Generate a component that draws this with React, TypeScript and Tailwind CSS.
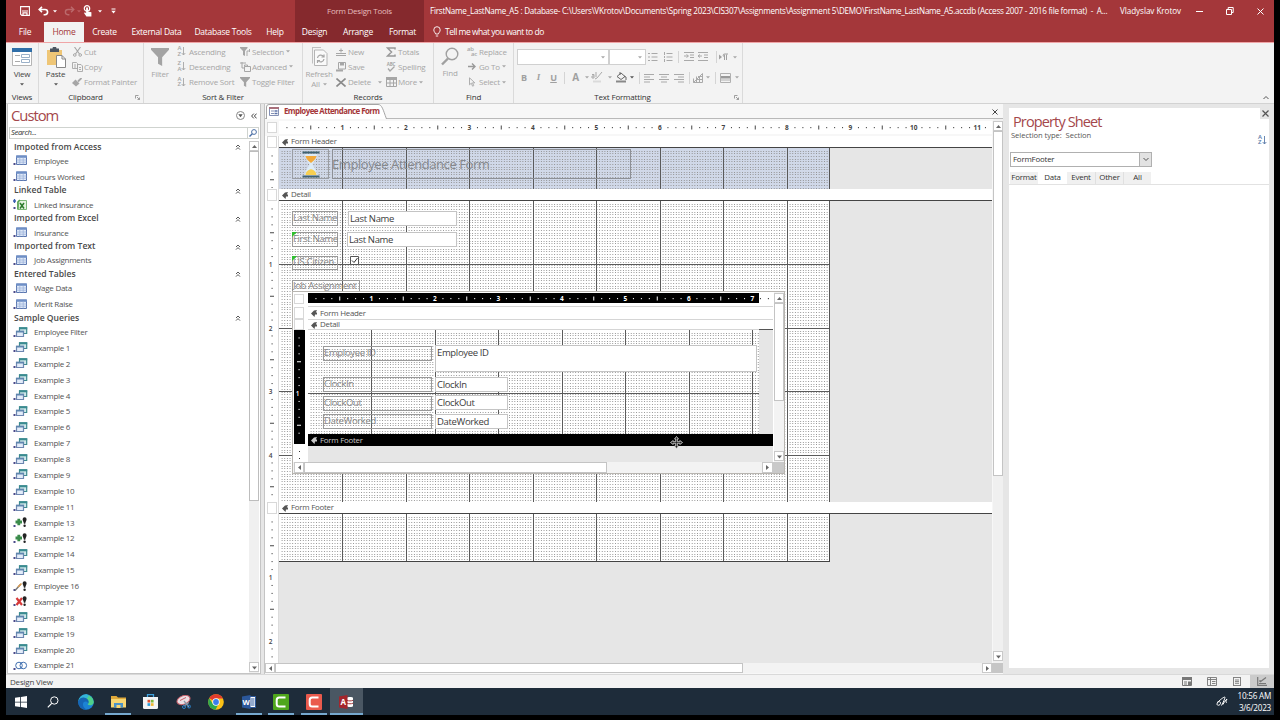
import type { ReactNode } from "react";

// ── Data ──────────────────────────────────────────────────────────────────────

type IconKind = "table" | "excel" | "query" | "append" | "update" | "delete" | "union";

const navGroups: { title: string; items: [string, IconKind][] }[] = [
  { title: "Impoted from Access", items: [["Employee", "table"], ["Hours Worked", "table"]] },
  { title: "Linked Table", items: [["Linked Insurance", "excel"]] },
  { title: "Imported from Excel", items: [["Insurance", "table"]] },
  { title: "Imported from Text", items: [["Job Assignments", "table"]] },
  { title: "Entered Tables", items: [["Wage Data", "table"], ["Merit Raise", "table"]] },
  {
    title: "Sample Queries",
    items: [
      ["Employee Filter", "query"],
      ["Example 1", "query"],
      ["Example 2", "query"],
      ["Example 3", "query"],
      ["Example 4", "query"],
      ["Example 5", "query"],
      ["Example 6", "query"],
      ["Example 7", "query"],
      ["Example 8", "query"],
      ["Example 9", "query"],
      ["Example 10", "query"],
      ["Example 11", "query"],
      ["Example 13", "append"],
      ["Example 12", "append"],
      ["Example 14", "query"],
      ["Example 15", "query"],
      ["Employee 16", "update"],
      ["Example 17", "delete"],
      ["Example 18", "query"],
      ["Example 19", "query"],
      ["Example 20", "query"],
      ["Example 21", "union"],
    ],
  },
];

// One inch on the design surface
const INCH = 63.5;
const DOT = INCH / 24;

// ── Small shared pieces ───────────────────────────────────────────────────────

function Svg({ w, h, children, className = "" }: { w: number; h: number; children: ReactNode; className?: string }) {
  return (
    <svg width={w} height={h} viewBox={`0 0 ${w} ${h}`} fill="none" className={`shrink-0 ${className}`}>
      {children}
    </svg>
  );
}

function Caret({ className = "text-[#a8a8a8]" }: { className?: string }) {
  return (
    <Svg w={4} h={3} className={className}>
      <path d="M0 .3h4L2 2.6z" fill="currentColor" />
    </Svg>
  );
}

function ScrollButton({ dir, className = "" }: { dir: "up" | "down" | "left" | "right"; className?: string }) {
  const shapes = { up: "M2 6l2.5-3L7 6z", down: "M2 3.5l2.5 3 2.5-3z", left: "M6 2L3 4.5 6 7z", right: "M3 2l3 2.5L3 7z" };
  return (
    <div className={`flex shrink-0 items-center justify-center border border-[#c9c9c9] bg-white ${className}`}>
      <Svg w={9} h={9}>
        <path d={shapes[dir]} fill="#666" />
      </Svg>
    </div>
  );
}

// ── Title bar and tabs ────────────────────────────────────────────────────────

function QuickAccess() {
  return (
    <div className="flex h-[22px] w-[289px] items-center pl-[14px] text-white">
      <Svg w={10} h={10}>
        <path d="M.6.6h8.8v8.8H1.8L.6 8.2z" stroke="currentColor" strokeWidth="1.1" />
        <path d="M2 5h6M3 9V6.8h4V9" stroke="currentColor" strokeWidth="1.2" />
      </Svg>
      <Svg w={11} h={10} className="ml-[8px]">
        <path d="M4 .8L1.2 3.5 4 6.2M1.4 3.5H7a2.6 2.6 0 010 5.2H5.6" stroke="currentColor" strokeWidth="1.6" />
      </Svg>
      <Caret className="ml-[4px] text-white" />
      <Svg w={11} h={10} className="ml-[7px] opacity-25">
        <path d="M7 .8l2.8 2.7L7 6.2M9.6 3.5H4a2.6 2.6 0 000 5.2h1.4" stroke="currentColor" strokeWidth="1.4" />
      </Svg>
      <Caret className="ml-[2px] text-[#bb5d60]" />
      <Svg w={10} h={12} className="ml-[2px]">
        <circle cx="4" cy="3.4" r="2.7" stroke="currentColor" strokeWidth="1.2" />
        <path d="M3.1 2.5H5v4l3.4.8v4.2h-5L1 8l1-.8 1.1 1z" fill="currentColor" />
      </Svg>
      <Caret className="ml-[5px] text-white" />
      <Svg w={5} h={6} className="ml-[9px]">
        <path d="M.5 1h4" stroke="currentColor" />
        <path d="M.3 2.8h4.4L2.5 5.4z" fill="currentColor" />
      </Svg>
    </div>
  );
}

function TitleBar() {
  return (
    <header className="flex h-[42px] shrink-0 bg-[#a4373a] text-[8.5px] tracking-[-0.25px] text-white">
      <div className="flex w-[289px] flex-col">
        <QuickAccess />
        <div className="flex h-[20px] items-center font-medium">
          <span className="flex w-[38px] justify-center">File</span>
          <span className="flex h-full w-[40px] items-center justify-center bg-[#f3f3f3] text-[#a4373a]">Home</span>
          <span className="flex w-[41px] justify-center">Create</span>
          <span className="flex w-[63px] justify-center">External Data</span>
          <span className="flex w-[70px] justify-center">Database Tools</span>
          <span className="flex w-[34px] justify-center">Help</span>
        </div>
      </div>
      <div className="flex w-[129px] flex-col bg-[#85292d]">
        <span className="flex h-[22px] items-center justify-center text-[8px] tracking-[-0.25px] text-[#e6bcbe]">Form Design Tools</span>
        <div className="flex h-[20px] items-center font-medium">
          <span className="flex w-[39px] justify-center">Design</span>
          <span className="flex w-[48px] justify-center">Arrange</span>
          <span className="flex w-[41px] justify-center">Format</span>
        </div>
      </div>
      <div className="flex flex-1 flex-col">
        <div className="flex h-[22px] items-center whitespace-nowrap text-[8.1px]">
          <span className="w-[689px] pl-[6px] tracking-[-0.25px]">
            FirstName_LastName_A5 : Database- C:\Users\VKrotov\Documents\Spring 2023\CIS307\Assignments\Assignment
            5\DEMO\FirstName_LastName_A5.accdb (Access 2007 - 2016 file format) &nbsp;- &nbsp;A...
          </span>
          <span className="w-[79px] pl-[7px] tracking-[-0.05px]">Vladyslav Krotov</span>
          <Svg w={7} h={8} className="ml-[4px]">
            <path d="M0 4.5h7" stroke="#fff" />
          </Svg>
          <Svg w={8} h={8} className="ml-[23px]">
            <path d="M.5 2.5h5v5h-5zM2.2 2.2V.5h5v5H5.8" stroke="#fff" />
          </Svg>
          <Svg w={7} h={7} className="ml-[23px]">
            <path d="M.5.5l6 6M6.5.5l-6 6" stroke="#fff" />
          </Svg>
        </div>
        <div className="flex h-[20px] items-center pl-[9px] font-medium">
          <Svg w={8} h={12}>
            <path d="M2.6 8C2.4 6.6.8 5.9.8 3.9a3.2 3.2 0 016.4 0c0 2-1.6 2.7-1.8 4.1zM2.8 10h2.4" stroke="#fff" strokeWidth=".9" />
          </Svg>
          <span className="ml-[4px] tracking-[-0.48px]">Tell me what you want to do</span>
        </div>
      </div>
    </header>
  );
}

// ── Ribbon ────────────────────────────────────────────────────────────────────

function Group({ label, className, launcher, children }: { label: string; className: string; launcher?: boolean; children: ReactNode }) {
  return (
    <section className={`flex shrink-0 flex-col border-r border-[#dadada] ${className}`}>
      <div className="flex h-[48px] pt-[1px]">{children}</div>
      <div className={`relative flex h-[13px] items-center justify-center text-[8px] tracking-[-0.18px] text-[#333] ${launcher ? "pr-[11px]" : ""}`}>
        {label}
        {launcher && (
          <Svg w={5} h={5} className="absolute right-[3px] top-[5px]">
            <path d="M.5 3.5v-3h3M2 2l2.5 2.5M4.5 2.5v2h-2" stroke="#888" strokeWidth=".8" />
          </Svg>
        )}
      </div>
    </section>
  );
}

function Cmd({ icon, label, caret, gap = "" }: { icon: ReactNode; label: string; caret?: boolean; gap?: string }) {
  return (
    <div className="flex h-[15.3px] items-center whitespace-nowrap text-[#a6a6a6]">
      <span className="flex w-[12px] shrink-0 justify-center">{icon}</span>
      <span className="ml-[1px]">{label}</span>
      {caret && <span className={`ml-[2px] ${gap}`}><Caret /></span>}
    </div>
  );
}

function SortIcon({ a, b }: { a: string; b: string }) {
  return (
    <span className="flex items-center">
      <span className="flex flex-col text-[6px] font-semibold leading-[5.5px]">
        <span>{a}</span>
        <span>{b}</span>
      </span>
      <Svg w={5} h={9}>
        <path d="M2.5 0v8M.7 6l1.8 2 1.8-2" stroke="currentColor" strokeWidth=".9" />
      </Svg>
    </span>
  );
}

function Funnel({ size = 10 }: { size?: number }) {
  return (
    <svg width={size} height={size} viewBox="0 0 10 10" className="shrink-0">
      <path d="M0 0h10v1L6.2 5.2V10L3.9 8.8V5.2L0 1z" fill="#a3a3a3" />
    </svg>
  );
}

const Sep = () => <i className="h-[12px] w-px shrink-0 bg-[#d4d4d4]" />;

function Lines({ d, className = "" }: { d: string; className?: string }) {
  return (
    <Svg w={10} h={10} className={className}>
      <path d={d} stroke="#a9a9a9" />
    </Svg>
  );
}

function TextFormatting() {
  return (
    <div className="flex w-full flex-col">
      <div className="mt-[5px] flex h-[16px] items-center">
        <div className="ml-[3px] flex h-[16px] w-[92px] items-center justify-end border border-[#d0d0d0] bg-white pr-[3px]"><Caret /></div>
        <div className="flex h-[16px] w-[37px] items-center justify-end border border-[#d0d0d0] bg-white pr-[3px]"><Caret /></div>
        <Lines className="ml-[2px]" d="M0 1.5h2M3.5 1.5h6M0 5h2M3.5 5h6M0 8.5h2M3.5 8.5h6" />
        <Lines className="ml-[5px] mr-[5px]" d="M1.5 0v3M3.5 1.5h6M1.5 4v2M3.5 5h6M1.5 7v3M3.5 8.5h6" />
        <Sep />
        <Lines className="ml-[5px]" d="M0 .5h10M6 3h4M6 5.5h4M0 8.5h10M0 4h4M2.5 2.5L4.5 4l-2 1.5" />
        <Lines className="ml-[4px] mr-[8px]" d="M0 .5h10M6 3h4M6 5.5h4M0 8.5h10M0 4h4M2 2.5L0 4l2 1.5" />
        <Sep />
        <Svg w={9} h={8} className="ml-[2px] mr-[5px]">
          <path d="M0 1.5L3 4 0 6.5z" fill="#a0a0a0" />
          <path d="M5.5 7V1.5M7.5 7V1.5M9 1H5.5a1.3 1.3 0 000 2.6" stroke="#a0a0a0" />
        </Svg>
        <Caret />
      </div>
      <div className="mt-[5px] flex h-[15px] items-center text-[9px] font-bold text-[#a0a0a0]">
        <span className="ml-[3px] w-[14px] text-center">B</span>
        <span className="w-[15px] text-center font-['Liberation_Serif'] italic">I</span>
        <span className="w-[15px] text-center underline">U</span>
        <span className="w-[3px]" />
        <Sep />
        <span className="ml-[4px] w-[13px] text-center text-[10px]">A</span>
        <span className="ml-[3px]"><Caret /></span>
        <Svg w={12} h={11} className="ml-[2px]">
          <path d="M2 9.5h8" stroke="#dadada" strokeWidth="2" />
          <path d="M11 0L6 6l-2 1M1 2.5h2V6H1V4h2M5 0v5" stroke="#a9a9a9" />
        </Svg>
        <span className="ml-[5px]"><Caret /></span>
        <Svg w={12} h={11} className="ml-[3px]">
          <path d="M1 9.5h10" stroke="#888" strokeWidth="2" />
          <path d="M2 4.5L6 1l4 3.5-4 3zM5 3V0" stroke="#666" />
          <path d="M9 4l2 1v3" stroke="#666" />
        </Svg>
        <span className="ml-[3px] mr-[5px]"><Caret className="text-[#555]" /></span>
        <Sep />
        <Lines className="ml-[4px]" d="M0 1.5h10M0 4h6M0 6.5h10M0 9h6" />
        <Lines className="ml-[5px]" d="M0 1.5h10M2 4h6M0 6.5h10M2 9h6" />
        <Lines className="ml-[5px] mr-[5px]" d="M0 1.5h10M4 4h6M0 6.5h10M4 9h6" />
        <Sep />
        <Lines className="ml-[3px] mr-[3px]" d="M.5 9.5h9v-9zM.5 9.5v-4M3.5 9.5v-6M6.5 9.5v-6M3 6.5h6M5 3.5h5" />
        <Caret />
        <span className="w-[5px]" />
        <Sep />
        <Svg w={11} h={10} className="ml-[4px] mr-[4px]">
          <path d="M.5.5h10v9H.5zM.5 7h10" stroke="#b0b0b0" />
          <path d="M1 3h9v2.5H1z" fill="#999" />
        </Svg>
        <Caret />
      </div>
    </div>
  );
}

function Ribbon() {
  return (
    <div className="flex h-[62px] shrink-0 border-b border-t border-b-[#d2d2d2] border-t-[#f0a5a7] bg-[#f3f3f3] text-[8px] tracking-[-0.2px]">
      <Group label="Views" className="w-[33px]">
        <div className="flex w-[32px] flex-col items-center pt-[4px] text-[#444]">
          <Svg w={20} h={18}>
            <path d="M.5.5h19v17H.5z" fill="#fff" stroke="#b5b5b5" />
            <path d="M0 0h20v4H0z" fill="#2f6ea8" />
            <path d="M3 7.5h5M3 13.5h5" stroke="#aaa" />
            <path d="M9.5 6.5h8v3h-8zM9.5 11.5h8v3h-8z" stroke="#9ab0c8" />
          </Svg>
          <span className="mt-[2px]">View</span>
          <Caret className="mt-[3px] text-[#555]" />
        </div>
      </Group>
      <Group label="Clipboard" className="w-[105px]" launcher>
        <div className="flex w-[33px] flex-col items-center pt-[3px] text-[#444]">
          <Svg w={20} h={21}>
            <path d="M1 3h15v15H1z" fill="#efc676" />
            <path d="M4 1.5h2.5a2 2 0 014 0H13V5H4z" fill="#4c5560" />
            <path d="M10.5 8.5H16l3.5 3.5v8.5h-9z" fill="#fff" stroke="#888" />
            <path d="M16 8.5V12h3.5" stroke="#888" />
          </Svg>
          <span>Paste</span>
          <Caret className="mt-[3px] text-[#555]" />
        </div>
        <div className="-ml-[1px]">
          <Cmd
            label="Cut"
            icon={
              <Svg w={9} h={10}>
                <path d="M1.5 0l5 7M7.5 0l-5 7" stroke="currentColor" strokeWidth="1.1" />
                <circle cx="1.8" cy="8" r="1.3" stroke="currentColor" />
                <circle cx="7.2" cy="8" r="1.3" stroke="currentColor" />
              </Svg>
            }
          />
          <Cmd
            label="Copy"
            icon={
              <Svg w={11} h={10}>
                <path d="M.5.5h4l1 1v5h-5zM5.5 2.5H9L10.5 4v5.5h-5zM2 3h2M2 5h2M7 5.5h2M7 7.5h2" stroke="currentColor" strokeWidth=".9" />
              </Svg>
            }
          />
          <Cmd
            label="Format Painter"
            icon={
              <Svg w={10} h={9}>
                <path d="M9.5 0L6 3.5" stroke="currentColor" strokeWidth="1.8" />
                <path d="M3.5 1.5l4 4-3.5 3L0 5z" fill="currentColor" />
              </Svg>
            }
          />
        </div>
      </Group>
      <Group label="Sort & Filter" className="w-[159px]">
        <div className="flex w-[32px] flex-col items-center pt-[4px] text-[#a6a6a6]">
          <Funnel size={18} />
          <span className="mt-[2px]">Filter</span>
        </div>
        <div className="w-[63px]">
          <Cmd label="Ascending" icon={<SortIcon a="A" b="Z" />} />
          <Cmd label="Descending" icon={<SortIcon a="Z" b="A" />} />
          <Cmd label="Remove Sort" icon={<SortIcon a="A" b="Z" />} />
        </div>
        <div>
          <Cmd
            caret
            label="Selection"
            icon={
              <Svg w={11} h={10}>
                <path d="M0 0h7.5v1L5 4v5L3 8V4L0 1z" fill="currentColor" />
                <path d="M7 9V4h2.500M9.500 2v3" stroke="currentColor" strokeWidth=".9" />
              </Svg>
            }
          />
          <Cmd
            caret
            label="Advanced"
            icon={
              <Svg w={11} h={10}>
                <path d="M0 1h6M2 0v6h2M4.5 4.5h6v5h-6zM4.5 4.5V3h3v1.5" stroke="currentColor" />
              </Svg>
            }
          />
          <Cmd label="Toggle Filter" icon={<Funnel />} />
        </div>
      </Group>
      <Group label="Records" className="w-[131px]">
        <div className="flex w-[32px] flex-col items-center pt-[2px] leading-[10px] text-[#a6a6a6]">
          <Svg w={17} h={21}>
            <path d="M1 1.5h9M1.5 1.5v16" stroke="#c0c0c0" />
            <path d="M3.5 4h9L16 7.5v12H3.5z" fill="#fafafa" stroke="#b5b5b5" />
            <path d="M6.5 12a3.3 3.3 0 016-1.5M13 8.5V11h-2.500M13 13a3.300 3.300 0 01-6 1.500M6.500 17v-2.500H9" stroke="#a5a5a5" strokeWidth="1.2" />
          </Svg>
          <span className="mt-[2px]">Refresh</span>
          <span className="flex items-center gap-[3px]">All <Caret /></span>
        </div>
        <div className="w-[50px]">
          <Cmd
            label="New"
            icon={
              <Svg w={10} h={8}>
                <path d="M0 5.5h10M0 7.5h10M5 .5v4M3 2.5h4" stroke="currentColor" />
              </Svg>
            }
          />
          <Cmd
            label="Save"
            icon={
              <Svg w={10} h={10}>
                <path d="M2.5.5h7V7h-7z" stroke="currentColor" />
                <path d="M4 1h4v2.5H4zM0 7.5h7v2H0z" fill="currentColor" />
              </Svg>
            }
          />
          <Cmd
            caret
            gap="pl-[5px]"
            label="Delete"
            icon={
              <Svg w={10} h={9}>
                <path d="M.5.5l9 8M9.5.5l-9 8" stroke="#8a8a8a" strokeWidth="1.6" />
              </Svg>
            }
          />
        </div>
        <div>
          <Cmd
            label="Totals"
            icon={
              <Svg w={10} h={10}>
                <path d="M9 2.5V1H1.5l4 4-4 4H9V7.5" stroke="#999" strokeWidth="1.5" />
              </Svg>
            }
          />
          <Cmd
            label="Spelling"
            icon={
              <span className="flex flex-col items-center text-[4.5px] font-bold leading-[4px]">
                ABC
                <Svg w={8} h={6}>
                  <path d="M1 2.5L3 5 7.5.5" stroke="currentColor" strokeWidth="1.3" />
                </Svg>
              </span>
            }
          />
          <Cmd
            caret
            label="More"
            icon={
              <Svg w={11} h={10}>
                <path d="M.5.5h10v9H.5zM.5 6h10M4 2v7M7.5 2v7" stroke="currentColor" />
                <path d="M0 0h11v3H0z" fill="currentColor" />
              </Svg>
            }
          />
        </div>
      </Group>
      <Group label="Find" className="w-[80px]">
        <div className="flex w-[32px] flex-col items-center pt-[3px] text-[#a6a6a6]">
          <Svg w={18} h={19}>
            <circle cx="11" cy="7" r="5.8" stroke="#a0a0a0" strokeWidth="1.4" />
            <path d="M7 11.5l-6 6" stroke="#a0a0a0" strokeWidth="2.4" />
          </Svg>
          <span className="mt-[1px]">Find</span>
        </div>
        <div>
          <Cmd
            label="Replace"
            icon={
              <span className="flex flex-col text-[6px] font-semibold leading-[5px]">
                <span className="h-[5px]">ab</span>
                <span className="h-[5px] pl-[4px]">ac</span>
              </span>
            }
          />
          <Cmd
            caret
            label="Go To"
            icon={
              <Svg w={8} h={7}>
                <path d="M0 3.5h7M4 .5l3 3-3 3" stroke="#999" strokeWidth="1.4" />
              </Svg>
            }
          />
          <Cmd
            caret
            label="Select"
            icon={
              <Svg w={8} h={10}>
                <path d="M1.5.8v7l1.8-1.6 1.3 3 1.2-.6-1.3-2.8h2.3z" stroke="currentColor" strokeWidth=".9" />
              </Svg>
            }
          />
        </div>
      </Group>
      <Group label="Text Formatting" className="w-[229px]" launcher>
        <TextFormatting />
      </Group>
      <div className="flex flex-1 items-end justify-end pb-[3px] pr-[5px]">
        <Svg w={6} h={5}>
          <path d="M.5 4L3 1.5 5.5 4" stroke="#555" />
        </Svg>
      </div>
    </div>
  );
}

// ── Navigation pane ───────────────────────────────────────────────────────────

function Bang() {
  return (
    <>
      <path d="M9.6 2.2a2 2 0 014 0c0 1.300-1 2.300-1.300 4.500h-1.400C10.600 4.500 9.600 3.500 9.600 2.200z" fill="#222" />
      <circle cx="11.600" cy="8.800" r="1.200" fill="#222" />
    </>
  );
}

function ObjectIcon({ kind }: { kind: IconKind }) {
  return (
    <Svg w={15} h={11}>
      <path d="M.5 8h2v2h-2z" fill="#4a4a8a" />
      {kind === "table" && (
        <>
          <path d="M3.5 1h10v8.500h-10z" fill="#dfe9f8" stroke="#5a76ae" />
          <path d="M3 .5h11v2.300H3z" fill="#6e8fc6" />
          <path d="M3.5 5h10M3.5 7.2h10M6.8 2.5v7M10.2 2.5v7" stroke="#9db4da" strokeWidth=".8" />
        </>
      )}
      {kind === "excel" && (
        <>
          <path d="M1.5 0v4M0 2h3" stroke="#3a5fb0" strokeWidth="1.3" />
          <path d="M6 1.5h7.500v9H5z" fill="#e4f3e0" stroke="#7db878" />
          <path d="M7 4l4 5.500M11 4L7 9.500" stroke="#2b7a2b" strokeWidth="1.5" />
          <path d="M4.800 10.500V3l2-2" stroke="#4f9e48" strokeWidth="1.3" />
        </>
      )}
      {kind === "query" && (
        <>
          <path d="M6.5.8h7.200v5.700H6.500z" fill="#cfe9ea" stroke="#3f8a90" strokeWidth="1.2" />
          <path d="M6 .3h8.200v2H6z" fill="#3a8b90" />
          <path d="M3.5 4.300h7v5.200h-7z" fill="#e3ecf9" stroke="#6d86b0" strokeWidth="1.2" />
          <path d="M3 3.800h8v1.700H3z" fill="#5f86ae" />
        </>
      )}
      {kind === "append" && (
        <>
          <path d="M2.5 5H9M5.800 1.800v6.500" stroke="#3a8b4a" strokeWidth="2.8" />
          <Bang />
        </>
      )}
      {kind === "update" && (
        <>
          <path d="M2 9.5L7.500 3.500" stroke="#777" strokeWidth="1.4" />
          <path d="M5 6l3.500-3.500" stroke="#d89a52" strokeWidth="1.7" />
          <Bang />
        </>
      )}
      {kind === "delete" && (
        <>
          <path d="M3.5 2L9 9M9 2L3.500 9" stroke="#d63a3a" strokeWidth="2.2" />
          <Bang />
        </>
      )}
      {kind === "union" && (
        <>
          <circle cx="6" cy="5.5" r="3.3" stroke="#3f6faf" />
          <circle cx="10.3" cy="5.5" r="3.3" stroke="#3f6faf" />
        </>
      )}
    </Svg>
  );
}

function NavPane() {
  return (
    <aside className="ml-[1px] flex w-[254px] shrink-0 flex-col border-b border-l border-r border-[#c4c4c4] bg-white">
      <div className="flex h-[23px] items-center pl-[3px] pr-[2px]">
        <h2 className="text-[14.8px] tracking-[-1px] text-[#a4474b]">Custom</h2>
        <Svg w={9} h={9} className="ml-auto">
          <circle cx="4.5" cy="4.5" r="4" stroke="#888" />
          <path d="M2.3 3.2h4.4L4.5 6.3z" fill="#555" />
        </Svg>
        <Svg w={6} h={6} className="ml-[6px] mr-[1px]">
          <path d="M2.8.6L.6 3l2.2 2.4M5.6.6L3.4 3l2.2 2.4" stroke="#444" />
        </Svg>
      </div>
      <div className="mx-[1px] flex h-[12px] items-center border border-[#cfd3cf] pl-[1px] text-[7.7px] italic tracking-[-0.4px] text-[#333]">
        Search...
        <span className="ml-auto flex h-full w-[11px] items-center justify-center border-l border-[#cfd3cf]">
          <Svg w={8} h={8}>
            <circle cx="5" cy="3" r="2.4" stroke="#4a6fa5" />
            <path d="M3.3 4.7L.5 7.5" stroke="#4a6fa5" strokeWidth="1.4" />
          </Svg>
        </span>
      </div>
      <div className="mt-[2px] flex min-h-0 flex-1">
        <div className="flex-1">
          {navGroups.map((group) => (
            <section key={group.title}>
              <div className="flex h-[12px] items-center pl-[6px] pr-[8px] text-[8.6px] font-semibold text-[#4a4a4a]">
                {group.title}
                <Svg w={6} h={6} className="ml-auto">
                  <path d="M1 3l2-2 2 2M1 5.6l2-2 2 2" stroke="#444" strokeWidth=".9" />
                </Svg>
              </div>
              {group.items.map(([label, kind]) => (
                <div key={label} className="flex h-[15.88px] items-center pl-[5px] text-[8px] tracking-[-0.27px] text-[#525252]">
                  <ObjectIcon kind={kind} />
                  <span className="ml-[6px]">{label}</span>
                </div>
              ))}
            </section>
          ))}
        </div>
        <div className="mr-[1px] flex w-[10px] flex-col bg-[#f0f0f0]">
          <ScrollButton dir="up" className="h-[10px]" />
          <div className="h-[350px] border border-[#bdbdbd] bg-white" />
          <ScrollButton dir="down" className="mb-[1px] mt-auto h-[10px]" />
        </div>
      </div>
    </aside>
  );
}

// ── Design surface ────────────────────────────────────────────────────────────

function Grid({ w, h }: { w: number; h: number }) {
  let dots = "";
  for (let y = DOT; y < h; y += DOT) dots += `M${DOT} ${Math.round(y) + 0.5}H${w}`;
  let lines = "";
  for (let x = INCH; x < w; x += INCH) lines += `M${Math.floor(x) + 0.5} 0V${h}`;
  for (let y = INCH; y < h; y += INCH) lines += `M0 ${Math.floor(y) + 0.5}H${w}`;
  return (
    <Svg w={w} h={h} className="block">
      <path d={dots} stroke="#8f8f8f" strokeDasharray={`0.9 ${DOT - 0.9}`} />
      <path d={lines} stroke="#5a5a5a" />
    </Svg>
  );
}

function HRuler({ w, color, offset = 0 }: { w: number; color: string; offset?: number }) {
  const step = INCH / 8;
  const marks = Array.from({ length: Math.floor((w + offset) / step) }, (_, i) => i + 1).filter((i) => i * step > offset);
  return (
    <Svg w={w} h={10}>
      {marks.map((i) => {
        const x = i * step - offset;
        if (i % 8 === 0)
          return (
            <text key={i} x={x - 0.2} y={8} fontSize={6.5} fontWeight={700} textAnchor="middle" fill={color}>
              {i / 8}
            </text>
          );
        return <path key={i} d={i % 4 === 0 ? `M${x} 3.5v4` : `M${x} 5v1.2`} stroke={color} />;
      })}
    </Svg>
  );
}

function VRuler({ h, color }: { h: number; color: string }) {
  const step = INCH / 8;
  const marks = Array.from({ length: Math.floor(h / step) }, (_, i) => i + 1);
  return (
    <Svg w={9} h={h} className="block">
      {marks.map((i) => {
        const y = i * step;
        if (i % 8 === 0)
          return (
            <text key={i} x={3.5} y={y + 2.5} fontSize={6.5} fontWeight={600} textAnchor="middle" fill={color}>
              {i / 8}
            </text>
          );
        return <path key={i} d={i % 4 === 0 ? `M3 ${y}h4` : `M4.5 ${y}h1.2`} stroke={color} />;
      })}
    </Svg>
  );
}

function SectionBar({ label, className = "bg-white text-[#555]" }: { label: string; className?: string }) {
  return (
    <div className={`flex shrink-0 items-center pl-[3px] pt-[1px] text-[7.9px] tracking-[-0.25px] ${className}`}>
      <Svg w={6} h={7}>
        <path d="M0 3.5L3 .5 6 0 4.8 2.5H6v2H4L3.5 7z" fill="currentColor" />
      </Svg>
      <span className="ml-[3px]">{label}</span>
    </div>
  );
}

// Controls sit at their own coordinates on the form canvas
function FormLabel({ at, text, flag }: { at: string; text: string; flag?: boolean }) {
  return (
    <div className={`absolute flex items-center border border-[#999] pb-[2px] text-[9.5px] leading-none tracking-[-0.35px] text-[#858585] ${at}`}>
      {flag && <i className="absolute left-[-1px] top-[-1px] border-r-[5px] border-t-[5px] border-r-transparent border-t-[#2fc02f]" />}
      <span className="whitespace-nowrap">{text}</span>
    </div>
  );
}

function FormField({ at, text }: { at: string; text: string }) {
  return (
    <div className={`absolute border border-[#c4c4c4] bg-white pl-[1px] pt-[1px] text-[9.5px] leading-[11px] tracking-[-0.35px] text-[#3c3c3c] ${at}`}>
      {text}
    </div>
  );
}

function Subform() {
  return (
    <div className="absolute left-[13px] top-[90px] flex h-[183px] w-[493px] flex-col border border-[#b8b5b0] bg-white">
      <div className="flex h-[170px]">
        <div className="flex w-[15px] shrink-0 flex-col pl-[1px]">
          <div className="mt-[2px] h-[10px] w-[10px] border border-[#d8d8d8] bg-white" />
          <div className="mt-[3px] h-[12px] w-[10px] border border-[#d8d8d8]" />
          <div className="h-[11px] w-[10px] border border-[#d8d8d8]" />
          <div className="h-[114px] w-[11px] shrink-0 bg-black"><VRuler h={110} color="#fff" /></div>
          <div className="flex flex-col gap-[6px] pl-[5px] pt-[7px]">
            <i className="h-px w-px bg-[#333]" />
            <i className="h-px w-px bg-[#333]" />
          </div>
        </div>
        <div className="flex w-[465px] shrink-0 flex-col bg-[#e6e6e6]">
          <div className="flex h-[14px] bg-white pt-[1px]">
            <div className="h-[10px] w-[451px] bg-black"><HRuler w={451} color="#fff" /></div>
            <div className="h-[10px] w-[14px]"><HRuler w={14} color="#333" offset={451} /></div>
          </div>
          <SectionBar label="Form Header" className="h-[13px] border-t border-[#d5d5d5] bg-white text-[#555]" />
          <SectionBar label="Detail" className="h-[11px] border-y border-[#d5d5d5] bg-white text-[#555]" />
          <div className="relative h-[104px]">
            <div className="h-[104px] w-[451px] bg-white"><Grid w={451} h={104} /></div>
            <i className="absolute right-0 top-[-1px] h-px w-[14px] bg-[#555]" />
            <FormLabel at="left-[15px] top-[16px] h-[15px] w-[109px]" text="Employee ID" />
            <FormField at="left-[127px] top-[15px] h-[27px] w-[322px]" text="Employee ID" />
            <FormLabel at="left-[15px] top-[47px] h-[15px] w-[109px]" text="ClockIn" />
            <FormField at="left-[127px] top-[47px] h-[15px] w-[73px]" text="ClockIn" />
            <FormLabel at="left-[15px] top-[66px] h-[15px] w-[109px]" text="ClockOut" />
            <FormField at="left-[127px] top-[65px] h-[15px] w-[73px]" text="ClockOut" />
            <FormLabel at="left-[15px] top-[84px] h-[15px] w-[109px]" text="DateWorked" />
            <FormField at="left-[127px] top-[84px] h-[15px] w-[73px]" text="DateWorked" />
          </div>
          <SectionBar label="Form Footer" className="h-[12px] bg-black text-[#c8c8c8]" />
        </div>
        <div className="ml-[1px] flex w-[10px] flex-col bg-[#f3f3f3]">
          <ScrollButton dir="up" className="mt-[1px] h-[10px]" />
          <div className="h-[98px] border border-[#c4c4c4] bg-white" />
          <ScrollButton dir="down" className="mb-[1px] mt-auto h-[10px]" />
        </div>
      </div>
      <div className="flex h-[11px] bg-[#f3f3f3]">
        <ScrollButton dir="left" className="ml-[1px] w-[10px]" />
        <div className="w-[303px] border border-[#c4c4c4] bg-white" />
        <ScrollButton dir="right" className="ml-auto w-[11px]" />
        <div className="w-[11px] bg-[#c9c9c9]" />
      </div>
      {/* mouse pointer on the footer bar */}
      <Svg w={13} h={13} className="absolute left-[377px] top-[144px]">
        <path
          d="M6.5.5l2 2.500H7.300v2.700h2.500V4.500l2.700 2-2.700 2V7.300H7.300V10h1.200l-2 2.500-2-2.500h1.200V7.300H3.200v1.200L.5 6.500l2.700-2v1.200h2.500V3H4.500z"
          fill="#222"
          stroke="#ddd"
          strokeWidth=".8"
        />
      </Svg>
    </div>
  );
}

function DesignSurface() {
  return (
    <div className="flex w-[713px] shrink-0 flex-col bg-[#e6e6e6]">
      <SectionBar label="Form Header" className="h-[12px] border-b border-[#444] bg-white text-[#555]" />
      <div className="relative h-[41px]">
        <div className="h-[41px] w-[551px] border-r border-[#555] bg-[#d0d8e8]"><Grid w={550} h={41} /></div>
        <div className="absolute left-[13px] top-[1px] flex h-[30px] w-[37px] items-center justify-center border border-[#9a9da3]">
          <Svg w={18} h={27}>
            <path d="M3 3h12c0 5-3.5 7.5-4.5 10.5C11.5 16.500 15 19 15 24H3c0-5 3.500-7.500 4.500-10.500C6.500 10.500 3 8 3 3z" fill="#dcebf7" />
            <path d="M3.5 5h11c-.6 3.500-3.200 5-5.500 7-2.300-2-4.900-3.500-5.500-7z" fill="#f2a93b" />
            <path d="M3.5 24c.5-4 3.200-5 5.500-6 2.300 1 5 2 5.500 6z" fill="#f7cf52" />
            <path d="M.5 1.500h17M.5 25.500h17" stroke="#3f6273" strokeWidth="2" />
          </Svg>
        </div>
        <div className="absolute left-[53px] top-[1px] flex h-[30px] w-[299px] items-center border border-[#8d9096] pt-[2px] text-[13px] tracking-[-0.42px] text-[#85888e]">
          <span className="ml-[-1px]">Employee Attendance Form</span>
        </div>
      </div>
      <SectionBar label="Detail" className="h-[12px] border-b border-[#444] bg-white text-[#555]" />
      <div className="relative h-[301px]">
        <div className="h-[301px] w-[551px] border-r border-[#555] bg-white"><Grid w={550} h={301} /></div>
        <FormLabel at="left-[13px] top-[10px] h-[15px] w-[46px]" text="Last Name" />
        <FormField at="left-[69px] top-[10px] h-[15px] w-[109px]" text="Last Name" />
        <FormLabel at="left-[13px] top-[31px] h-[15px] w-[46px]" text="First Name" flag />
        <FormField at="left-[68px] top-[31px] h-[15px] w-[110px]" text="Last Name" />
        <FormLabel at="left-[13px] top-[55px] h-[14px] w-[46px]" text="US Citizen" flag />
        <Svg w={9} h={9} className="absolute left-[71px] top-[55px]">
          <path d="M.5.5h8v8h-8z" fill="#fff" stroke="#555" />
          <path d="M2 4.5l2 2L7.500 2" stroke="#333" />
        </Svg>
        <FormLabel at="left-[13px] top-[79px] h-[14px] w-[68px]" text="Job Assignment" />
        <Subform />
      </div>
      <SectionBar label="Form Footer" className="h-[12px] border-b border-[#444] bg-white text-[#555]" />
      <div className="h-[48px] w-[551px] border-b border-r border-[#444] bg-white"><Grid w={550} h={47} /></div>
    </div>
  );
}

function Document() {
  return (
    <main className="ml-[3px] flex w-[739px] shrink-0 flex-col border-l border-[#c4c4c4] bg-[#f7f7f7]">
      <div className="flex h-[15px] border-b border-[#b9b9b9]">
        <div className="ml-[1px] flex items-center">
          <Svg w={122} h={15} className="absolute">
            <path d="M.5 15V3A2.5 2.5 0 013 .5h109c4 0 5 5 8.500 14.500" fill="#fff" stroke="#a5a5a5" />
          </Svg>
          <Svg w={10} h={9} className="relative ml-[3px]">
            <path d="M.5.5h9v8h-9z" fill="#fff" stroke="#8591b5" />
            <path d="M0 0h10v2H0z" fill="#a8707c" />
            <path d="M2 4h3M2 6.5h3" stroke="#8591b5" />
            <path d="M5.5 3.3h3v1.5h-3zM5.5 5.8h3v1.500h-3z" fill="#5d73a8" />
          </Svg>
          <span className="relative ml-[5px] pt-[2px] text-[7.9px] font-bold tracking-[-0.55px] text-[#a4373a]">Employee Attendance Form</span>
        </div>
        <Svg w={6} h={6} className="ml-auto mr-[5px] mt-[5px]">
          <path d="M.5.5l5 5M5.5.5l-5 5" stroke="#444" />
        </Svg>
      </div>
      <div className="flex h-[544px]">
        <div className="flex w-[728px] flex-col">
          <div className="flex h-[17px] items-center">
            <div className="ml-[2px] h-[11px] w-[10px] border border-[#d8d8d8] bg-white" />
            <div className="ml-[2px] flex h-[13px] items-start bg-white pt-[1px]"><HRuler w={713} color="#444" /></div>
          </div>
          <div className="flex h-[527px]">
            <div className="flex w-[14px] shrink-0 flex-col border-r border-[#dcdcdc] bg-white pl-[2px]">
              <div className="h-[12px] w-[10px] border border-[#d8d8d8]" />
              <div className="h-[41px]"><VRuler h={40} color="#444" /></div>
              <div className="h-[12px] w-[10px] border border-[#d8d8d8]" />
              <div className="h-[301px]"><VRuler h={298} color="#444" /></div>
              <div className="h-[12px] w-[10px] border border-[#d8d8d8]" />
              <div className="h-[149px]"><VRuler h={146} color="#444" /></div>
            </div>
            <DesignSurface />
          </div>
        </div>
        <div className="flex w-[10px] flex-col bg-[#f0f0f0] pt-[2px]">
          <ScrollButton dir="up" className="h-[10px]" />
          <div className="h-[345px] border border-[#c4c4c4] bg-white" />
          <ScrollButton dir="down" className="mb-[2px] mt-auto h-[10px]" />
        </div>
      </div>
      <div className="flex h-[10px] bg-[#f3f3f3]">
        <ScrollButton dir="left" className="w-[10px]" />
        <div className="w-[468px] border border-[#c4c4c4] bg-white" />
        <ScrollButton dir="right" className="ml-auto w-[10px]" />
        <div className="w-[11px] bg-[#c6c6c6]" />
      </div>
    </main>
  );
}

// ── Property sheet ────────────────────────────────────────────────────────────

function PropertySheet() {
  return (
    <aside className="mb-[6px] ml-[6px] mt-[4px] flex w-[260px] flex-col bg-white">
      <div className="flex h-[20px]">
        <h2 className="pl-[4px] pt-[4px] text-[14.5px] leading-[20px] tracking-[-0.87px] text-[#a4474b]">Property Sheet</h2>
        <span className="mr-[-1px] ml-auto flex h-[11px] w-[10px] items-center justify-center bg-[#e6e6e6]">
          <Svg w={7} h={7}>
            <path d="M.5.5l6 6M6.5.5l-6 6" stroke="#555" strokeWidth="1.2" />
          </Svg>
        </span>
      </div>
      <div className="flex h-[24px] justify-between pl-[2px] pr-[2px] text-[7.6px] tracking-[-0.05px] text-[#555]">
        <span className="pt-[2px]">Selection type: &nbsp;Section</span>
        <span className="flex items-center text-[#5a7aa8]">
          <SortIcon a="A" b="Z" />
        </span>
      </div>
      <div className="ml-[1px] flex h-[15px] w-[142px] items-center border border-[#b0b0b0] pl-[2px] text-[7.9px] tracking-[-0.2px] text-[#333]">
        FormFooter
        <span className="ml-auto flex h-full w-[12px] items-center justify-center border-l border-[#b0b0b0] bg-[#e2e2e2]">
          <Svg w={6} h={5}>
            <path d="M.5 1L3 3.5 5.5 1" stroke="#555" />
          </Svg>
        </span>
      </div>
      <div className="mt-[4px] flex h-[14px] items-end border-b border-[#e2e2e2] pl-[1px] text-[7.9px] tracking-[-0.2px] text-[#333]">
        <span className="flex h-[12px] w-[28px] items-center justify-center bg-[#f0f0f0]">Format</span>
        <span className="flex h-[13px] w-[29px] items-center justify-center bg-white">Data</span>
        <span className="flex h-[12px] w-[28px] items-center justify-center bg-[#f0f0f0]">Event</span>
        <span className="flex h-[12px] w-[28px] items-center justify-center border-l border-[#e0e0e0] bg-[#f0f0f0]">Other</span>
        <span className="flex h-[12px] w-[28px] items-center justify-center border-l border-[#e0e0e0] bg-[#f0f0f0]">All</span>
      </div>
    </aside>
  );
}

// ── Status bar ────────────────────────────────────────────────────────────────

function StatusBar() {
  return (
    <footer className="flex h-[14px] shrink-0 items-center border-t border-[#d9d9d9] bg-[#f3f3f3] pl-[4px] text-[8px] tracking-[-0.2px] text-[#444]">
      Design View
      <Svg w={10} h={9} className="ml-auto">
        <path d="M.5.5h9v8h-9z" stroke="#777" />
        <path d="M0 0h10v3H0zM6 4.5h3V8H6z" fill="#777" />
        <path d="M2 5h3M2 7h3" stroke="#777" />
      </Svg>
      <Svg w={10} h={9} className="ml-[15px]">
        <path d="M.5.5h9v8h-9zM3.5.5v8M.5 2.5h9M5 4.5h3.5M5 6.5h3.5" stroke="#777" strokeWidth=".9" />
      </Svg>
      <Svg w={8} h={9} className="ml-[16px]">
        <path d="M.5 0v9M7.5 0v9M.5.5h7M.5 8.5h7M2 3h4M2 4.6h4M2 6.3h4" stroke="#777" strokeWidth=".9" />
      </Svg>
      <span className="ml-[9px] flex h-full w-[24px] items-center justify-center bg-[#cbcbcb]">
        <Svg w={10} h={9}>
          <path d="M.7 0v8.3H10M2 6.5h7M3 5l6-4.5M3 5V3" stroke="#777" strokeWidth="1.2" />
        </Svg>
      </span>
    </footer>
  );
}

// ── Taskbar ───────────────────────────────────────────────────────────────────

function Task({ children, open, active }: { children: ReactNode; open?: boolean; active?: boolean }) {
  return (
    <div className={`flex h-full w-[32.55px] flex-col items-center ${active ? "bg-[#4a5763]" : ""}`}>
      <div className="flex flex-1 items-center pt-[2px]">{children}</div>
      <i className={`h-[2px] ${active ? "w-full" : "w-[26px]"} ${open ? "bg-[#76a9cf]" : ""}`} />
    </div>
  );
}

function Taskbar() {
  return (
    <nav className="flex h-[27px] shrink-0 items-center bg-[#1e2c3a]">
      <div className="-ml-[1.5px] flex h-full">
        <Task>
          <Svg w={12} h={12}>
            <path d="M0 1.7L5.2 1v4.7H0zM6 .9L12 0v5.7H6zM0 6.4h5.2V11L0 10.3zM6 6.4h6V12l-6-.9z" fill="#fff" />
          </Svg>
        </Task>
        <Task>
          <Svg w={12} h={12}>
            <circle cx="7.3" cy="4.5" r="3.7" stroke="#fff" />
            <path d="M4.7 7.3L.8 11.3" stroke="#fff" strokeWidth="1.2" />
          </Svg>
        </Task>
        <Task>
          <Svg w={16} h={16}>
            <circle cx="8" cy="8" r="7.8" fill="#1c83d4" />
            <path d="M.4 7A7.8 7.8 0 0115.8 8c0 2.500-2 3.300-4 3.300-1.700 0-2.600-.8-1.600-1.700C11.300 7.500 9 4.800 6 4.800 3 4.800 1 6 .4 7z" fill="#4fd08a" />
            <path d="M.4 7A7.8 7.8 0 019 .3C12 2 10 4.800 6 4.800 3 4.800 1 6 .4 7z" fill="#35b4d8" />
            <path d="M.3 7C1.5 4.3 4 3.3 6.5 3.7 10 4.2 11.500 7.300 10.200 9.500 9 6.800 5.500 7 5 10c-.2 2.500 1.500 4.500 4 5.600C4.500 16.300-.3 12.800.3 7z" fill="#1565b5" />
          </Svg>
        </Task>
        <Task open>
          <Svg w={15} h={13}>
            <path d="M0 1h5.5L7 2.500h8V12H0z" fill="#e0a93a" />
            <path d="M0 4h15v8.500H0z" fill="#f7d673" />
            <path d="M3 8h9v4.500H3z" fill="#4a93c9" />
            <path d="M5.5 10h4v3h-4z" fill="#f7d673" />
          </Svg>
        </Task>
        <Task>
          <Svg w={15} h={15}>
            <path d="M4.5 3.5v-3h6v3" stroke="#3ea0dc" strokeWidth="1.3" />
            <path d="M0 3h15v10.500a1.500 1.500 0 01-1.500 1.500h-12A1.500 1.500 0 010 13.500z" fill="#f4f4f4" />
            <path d="M4.5 5.8h2.700v2.700H4.500z" fill="#e0502e" />
            <path d="M7.9 5.8h2.700v2.700H7.900z" fill="#7db83a" />
            <path d="M4.5 9.2h2.700v2.700H4.500z" fill="#2a9ddb" />
            <path d="M7.9 9.2h2.700v2.700H7.900z" fill="#f2b632" />
          </Svg>
        </Task>
        <Task>
          <Svg w={15} h={14}>
            <ellipse cx="7.5" cy="5" rx="6.8" ry="4.2" transform="rotate(-22 7.5 5)" fill="#ecdfe4" stroke="#c9606b" />
            <path d="M4 5.5l6-3" stroke="#c9606b" />
            <path d="M8 6l5 6M13 7.5L8 11" stroke="#8a9aa9" strokeWidth="1.2" />
            <circle cx="13" cy="11.5" r="1.5" stroke="#2d7fc4" />
            <circle cx="8" cy="12" r="1.5" stroke="#2d7fc4" />
          </Svg>
        </Task>
        <Task>
          <Svg w={16} h={16}>
            <circle cx="8" cy="8" r="7.8" fill="#fbc116" />
            <path d="M8 8L1.2 4.2A7.8 7.8 0 0114.9 4.4H8z" fill="#e33b2e" />
            <path d="M1.2 4.2A7.8 7.8 0 007.5 15.8L10.500 10 8 8 4.600 9.500z" fill="#2da94f" />
            <circle cx="8" cy="8" r="3.7" fill="#fff" />
            <circle cx="8" cy="8" r="2.9" fill="#3b7ded" />
          </Svg>
        </Task>
        <Task open>
          <Svg w={14} h={14}>
            <path d="M6 1.5h7.5v11H6z" fill="#fff" stroke="#2b579a" />
            <path d="M9 4h3.5M9 6h3.5M9 8h3.5M9 10h3.5" stroke="#2b579a" />
            <path d="M0 1.5L8.5 0v14L0 12.5z" fill="#2b579a" />
            <text x="4.2" y="9.8" fontSize="7.5" fontWeight="700" textAnchor="middle" fill="#fff">W</text>
          </Svg>
        </Task>
        <Task open>
          <Svg w={16} h={16}>
            <rect width="16" height="16" rx="1" fill="#4fa61c" />
            <path d="M12.5 3.5H6.2A2.5 2.5 0 003.7 6v4a2.5 2.5 0 002.5 2.5h6.3" stroke="#fff" strokeWidth="2" />
          </Svg>
        </Task>
        <Task open>
          <Svg w={16} h={16}>
            <rect width="16" height="16" rx="1" fill="#ea5a4d" />
            <path d="M12.5 3.5H6.2A2.5 2.5 0 003.7 6v4a2.5 2.5 0 002.5 2.5h6.3" stroke="#fff" strokeWidth="2" />
          </Svg>
        </Task>
        <Task open active>
          <Svg w={15} h={14}>
            <path d="M8 3c0-1.300 6-1.300 6 0v8c0 1.300-6 1.300-6 0z" fill="#fff" />
            <path d="M8 5.3c2 .8 4 .8 6 0M8 8.2c2 .8 4 .8 6 0" stroke="#a4373a" />
            <path d="M0 1.5L8.5 0v14L0 12.5z" fill="#a4262c" />
            <text x="4.3" y="9.8" fontSize="8" fontWeight="700" textAnchor="middle" fill="#fff">A</text>
          </Svg>
        </Task>
      </div>
      <Svg w={12} h={11} className="ml-auto">
        <path d="M1 6.5c1.5-1.500 4-1 3.500 1S1 10 1 8s6-6.500 7.500-7S7 7 5.500 9.500M7 8.500c1-2 2-4 4-5.500-1.500 2.500-1.500 4 0 3" stroke="#fff" />
      </Svg>
      <div className="ml-[9px] mr-[3px] flex flex-col items-end gap-[1px] text-[8.2px] leading-[11px] tracking-[-0.25px] text-white">
        <span>10:56 AM</span>
        <span>3/6/2023</span>
      </div>
    </nav>
  );
}

export default function App() {
  return (
    <div className="h-[720px] w-[1280px] overflow-hidden bg-black px-[6px] font-['Open_Sans','Noto_Sans',sans-serif]">
      <div className="flex h-[715px] flex-col bg-[#e6e6e6]">
        <TitleBar />
        <Ribbon />
        <div className="flex h-[570px] shrink-0">
          <NavPane />
          <Document />
          <PropertySheet />
        </div>
        <StatusBar />
        <Taskbar />
      </div>
    </div>
  );
}
